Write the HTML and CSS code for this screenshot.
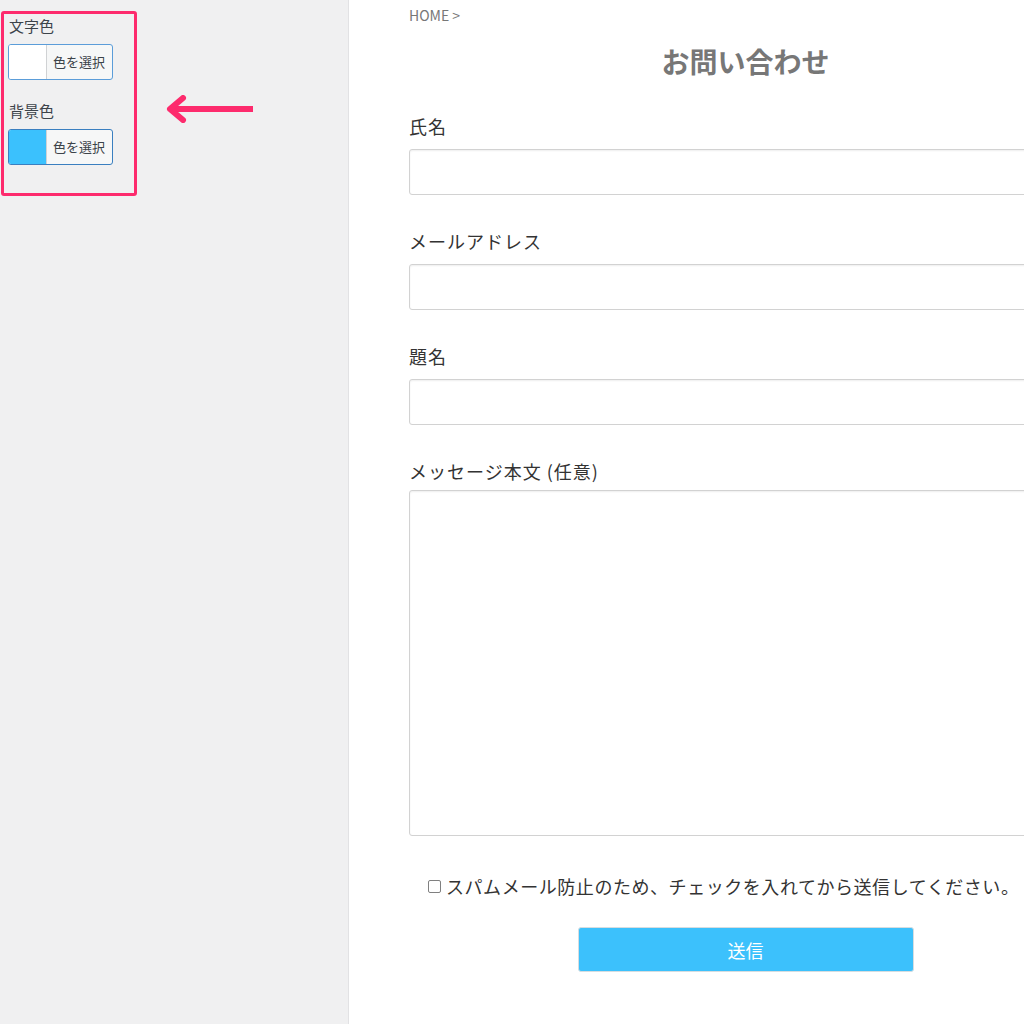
FILE: index.html
```html
<!DOCTYPE html>
<html lang="ja">
<head>
<meta charset="utf-8">
<title>お問い合わせ</title>
<link rel="stylesheet" href="styles.css">
</head>
<body>
<div class="page">
  <aside class="sidebar">
    <div class="settings-box">
      <div class="setting-label">文字色</div>
      <button class="color-btn color-btn-light" type="button"><span class="swatch swatch-white"></span><span class="color-btn-text">色を選択</span></button>
      <div class="setting-label setting-label-second">背景色</div>
      <button class="color-btn color-btn-dark" type="button"><span class="swatch swatch-blue"></span><span class="color-btn-text">色を選択</span></button>
    </div>
    <svg class="arrow" width="92" height="28" viewBox="0 0 92 28" aria-hidden="true">
      <path d="M8 14 H88" stroke="#fd2b6d" stroke-width="6" fill="none" stroke-linecap="butt"/>
      <path d="M18 3 L5 14 L18 25" stroke="#fd2b6d" stroke-width="6" fill="none" stroke-linecap="round" stroke-linejoin="round"/>
    </svg>
  </aside>
  <main class="main">
    <div class="content">
      <div class="breadcrumb">HOME &gt;</div>
      <h1 class="title">お問い合わせ</h1>
      <div class="field">
        <label class="field-label">氏名</label>
        <input class="text-input" type="text">
      </div>
      <div class="field">
        <label class="field-label">メールアドレス</label>
        <input class="text-input" type="email">
      </div>
      <div class="field">
        <label class="field-label">題名</label>
        <input class="text-input" type="text">
      </div>
      <div class="field field-last">
        <label class="field-label">メッセージ本文 (任意)</label>
        <textarea class="text-area"></textarea>
      </div>
      <label class="consent"><input class="check" type="checkbox"><span>スパムメール防止のため、チェックを入れてから送信してください。</span></label>
      <button class="submit" type="button">送信</button>
    </div>
  </main>
</div>
</body>
</html>
```

FILE: styles.css
```css
html {
  overflow: hidden;
}
body {
  margin: 0;
  overflow: hidden;
  background: #ffffff;
  font-family: "Noto Sans CJK JP", "Noto Sans", sans-serif;
}
.page {
  display: flex;
  width: max-content;
  min-height: 1024px;
}
.sidebar {
  width: 349px;
  border-right: 1px solid #e2e2e4;
  background: #f0f0f1;
  padding: 11px 0 0 1px;
  box-sizing: border-box;
  display: flex;
  align-items: flex-start;
  flex-shrink: 0;
}
.settings-box {
  width: 136px;
  box-sizing: border-box;
  border: 3px solid #fd2b6d;
  border-radius: 3px;
  padding: 2px 0 28px 4px;
}
.setting-label {
  font-size: 15px;
  line-height: 20px;
  color: #3c434a;
  padding-left: 1px;
}
.setting-label-second {
  margin-top: 21px;
}
.color-btn {
  display: flex;
  align-items: stretch;
  height: 36px;
  box-sizing: border-box;
  padding: 0;
  margin: 8px 0 0 0;
  border: 1px solid #5b9dd9;
  border-radius: 3px;
  background: #f6f7f7;
  overflow: hidden;
  font-family: inherit;
}
.setting-label-second + .color-btn {
  margin-top: 8px;
}
.color-btn-dark {
  border-color: #3a7fc0;
}
.swatch {
  width: 37px;
  border-right: 1px solid #d0d2d4;
}
.swatch-white {
  background: #ffffff;
}
.swatch-blue {
  background: #3bc1fd;
}
.color-btn-text {
  font-size: 13px;
  line-height: 34px;
  color: #3c434a;
  padding: 0 7px 0 6px;
}
.arrow {
  display: block;
  margin: 84px 0 0 28px;
}
.main {
  padding-left: 60px;
  flex-shrink: 0;
}
.content {
  width: 673px;
}
.breadcrumb {
  font-size: 14px;
  line-height: 20px;
  color: #777777;
  padding-top: 5px;
}
.title {
  margin: 16px 0 33px;
  font-size: 28px;
  line-height: 40px;
  font-weight: 700;
  color: #777777;
  text-align: center;
}
.field {
  margin-bottom: 34px;
}
.field-last {
  margin-bottom: 36px;
}
.field-label {
  display: block;
  font-size: 18px;
  line-height: 24px;
  letter-spacing: 1px;
  color: #333333;
}
.text-input,
.text-area {
  display: block;
  width: 100%;
  box-sizing: border-box;
  border: 1px solid #d2d2d2;
  border-radius: 3px;
  background: #ffffff;
  box-shadow: inset 0 1px 2px rgba(0, 0, 0, 0.07);
  margin: 11px 0 0;
  font-family: inherit;
}
.text-input {
  height: 46px;
}
.text-area {
  height: 346px;
  margin-top: 7px;
  resize: none;
}
.consent {
  display: flex;
  align-items: center;
  gap: 5px;
  padding-left: 19px;
  font-size: 18px;
  line-height: 28px;
  letter-spacing: 0.55px;
  color: #333333;
  white-space: nowrap;
}
.check {
  appearance: none;
  -webkit-appearance: none;
  width: 13px;
  height: 13px;
  margin: 0;
  border: 1px solid #808080;
  border-radius: 2px;
  background: #ffffff;
  flex-shrink: 0;
}
.submit {
  display: block;
  width: 336px;
  height: 45px;
  margin: 27px auto 0;
  border: 1px solid #d6dde0;
  border-radius: 3px;
  background: #3cc1fc;
  color: #ffffff;
  font-family: inherit;
  font-size: 18px;
}
```
